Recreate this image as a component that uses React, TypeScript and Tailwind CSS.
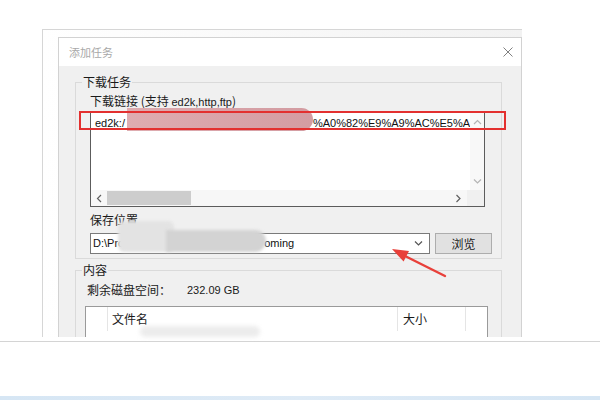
import React from 'react'

const cjk = "font-['Noto_Sans_CJK_SC','Noto_Sans',sans-serif]"
const latin = "font-['Liberation_Sans','Noto_Sans',sans-serif]"

function Chevron({ dir, className }: { dir: 'up' | 'down' | 'left' | 'right'; className?: string }) {
  const d = {
    up: 'M1 5 L4.5 1.5 L8 5',
    down: 'M1 1.5 L4.5 5 L8 1.5',
    left: 'M5 1 L1.5 4.5 L5 8',
    right: 'M1.5 1 L5 4.5 L1.5 8',
  }[dir]
  const vertical = dir === 'up' || dir === 'down'
  return (
    <svg width={vertical ? 9 : 7} height={vertical ? 7 : 9} viewBox={vertical ? '0 0 9 7' : '0 0 7 9'} className={className}>
      <path d={d} fill="none" stroke="currentColor" strokeWidth="1.2" />
    </svg>
  )
}

function LinkBox() {
  return (
    <div className="mt-[2px] w-[395px] h-[95px] border border-[#5c5c5c] bg-white flex flex-col">
      <div className="flex flex-1">
        <div className={`flex-1 pl-[4px] pt-[2px] flex items-center h-[18px] text-[11px] text-[#111] ${latin}`}>
          <span>ed2k:/</span>
          <span className="w-[188px] shrink-0" />
          <span>%A0%82%E9%A9%AC%E5%A</span>
        </div>
        <div className="w-[17px] bg-[#f8f8f8] flex flex-col items-center justify-between pt-[6px] pb-[5px] text-[#b4b4b4]">
          <Chevron dir="up" />
          <Chevron dir="down" />
        </div>
      </div>
      <div className="h-[16px] flex items-center bg-[#f7f7f7]">
        <div className="w-[16px] flex justify-center text-[#606060]">
          <Chevron dir="left" />
        </div>
        <div className="w-[84px] h-[14px] bg-[#cdcdcd]" />
        <div className="flex-1 flex justify-end pr-[5px] text-[#606060]">
          <Chevron dir="right" />
        </div>
        <div className="w-[17px] h-full bg-[#f0f0f0]" />
      </div>
    </div>
  )
}

export default function App() {
  return (
    <div className={`relative w-[600px] h-[400px] overflow-hidden bg-white text-[12px] text-[#1a1a1a] ${cjk}`}>
      <div className="pt-[29px]">
        {/* screenshot frame */}
        <div className="ml-[42px] w-[480px] h-[308px] border-l border-t border-[#d6d6d6] bg-gradient-to-r from-white to-[#f2f2f2] pl-[15px] pt-[7px]">
          <div className="h-full border-l border-t border-r border-[#d2d2d2] flex flex-col overflow-hidden">
            {/* title bar */}
            <div className="h-[28px] shrink-0 bg-white flex items-center justify-between pl-[10px] pr-[8px]">
              <span className="text-[11px] text-[#a8a8a8]">添加任务</span>
              <svg width="10" height="10" viewBox="0 0 10 10">
                <path d="M0.5 0.5 L9.5 9.5 M9.5 0.5 L0.5 9.5" stroke="#808080" strokeWidth="1" />
              </svg>
            </div>

            {/* body */}
            <div className="flex-1 bg-[#f0f0f0] pl-[16px]">
              {/* 下载任务 */}
              <div className="mt-[16px] w-[427px] h-[177px] border border-[#dadada] pl-[14px]">
                <div className="-mt-[9px] -ml-[8px] w-fit px-[1px] leading-[16px] bg-[#f0f0f0]">下载任务</div>
                <div className="mt-[3px] leading-[16px]">
                  下载链接 (支持 <span className={latin + ' text-[11px]'}>ed2k,http,ftp</span>)
                </div>
                <LinkBox />
                <div className="mt-[5px] leading-[16px]">保存位置</div>
                <div className="mt-[5px] flex gap-[5px]">
                  <div className={`w-[340px] h-[21px] border border-[#7a7a7a] bg-white flex items-center pl-[2px] pr-[6px] text-[11px] text-[#111] ${latin}`}>
                    <span>D:\Pro</span>
                    <span className="w-[140px] shrink-0" />
                    <span>oming</span>
                    <span className="flex-1" />
                    <Chevron dir="down" className="text-[#555]" />
                  </div>
                  <button className="w-[57px] h-[21px] border border-[#adadad] bg-[#e1e1e1] text-[12px] leading-none">浏览</button>
                </div>
              </div>

              {/* 内容 */}
              <div className="mt-[11px] w-[427px] h-[120px] border border-[#dadada] pl-[9px]">
                <div className="-mt-[9px] -ml-[3px] w-fit px-[1px] leading-[16px] bg-[#f0f0f0]">内容</div>
                <div className="mt-[4px] ml-[2px] flex leading-[16px]">
                  <span className="w-[100px]">剩余磁盘空间：</span>
                  <span className={`${latin} text-[11px]`}>232.09 GB</span>
                </div>
                <div className="mt-[8px] w-[403px] h-[60px] border border-[#9a9a9a] bg-white">
                  <div className="flex h-[24px] items-center">
                    <div className="w-[22px] h-full border-r border-[#e5e5e5]" />
                    <div className="w-[290px] pl-[4px] h-full flex items-center border-r border-[#e5e5e5]">文件名</div>
                    <div className="w-[68px] pl-[5px] h-full flex items-center border-r border-[#e5e5e5]">大小</div>
                  </div>
                </div>
              </div>
            </div>
          </div>
        </div>

        <div className="mt-[4px] h-px bg-[#d4d4d4]" />
        <div className="h-[54px]" />
        <div className="h-[5px] bg-gradient-to-r from-[#d6e6f4] via-[#dfebf6] to-[#d6e6f4]" />
      </div>

      {/* redaction blobs */}
      <div className="absolute left-[127px] top-[108px] w-[186px] h-[23px] rounded-r-[12px] bg-gradient-to-r from-[#dba4a8] via-[#d59aa0] to-[#cf9298] opacity-90" />
      <div className="absolute left-[118px] top-[221px] w-[56px] h-[31px] rounded-[6px] bg-[#e3e3e3] blur-[1.5px]" />
      <div className="absolute left-[166px] top-[230px] w-[100px] h-[22px] rounded-r-full bg-[#d3d3d3] blur-[1.5px]" />
      <div className="absolute left-[140px] top-[326px] w-[120px] h-[11px] rounded-full bg-[#ececec] blur-[2px]" />

      {/* red annotation box */}
      <div className="absolute left-[79px] top-[111px] w-[427px] h-[19px] border-2 border-[#e3302f]" />

      {/* red arrow */}
      <svg className="absolute left-[388px] top-[244px]" width="62" height="36" viewBox="0 0 62 36">
        <polygon points="4,5 15.6,17.6 21,7" fill="#e8403a" />
        <path d="M17 12 L57 32" stroke="#e8403a" strokeWidth="2.4" strokeLinecap="round" />
      </svg>
    </div>
  )
}
